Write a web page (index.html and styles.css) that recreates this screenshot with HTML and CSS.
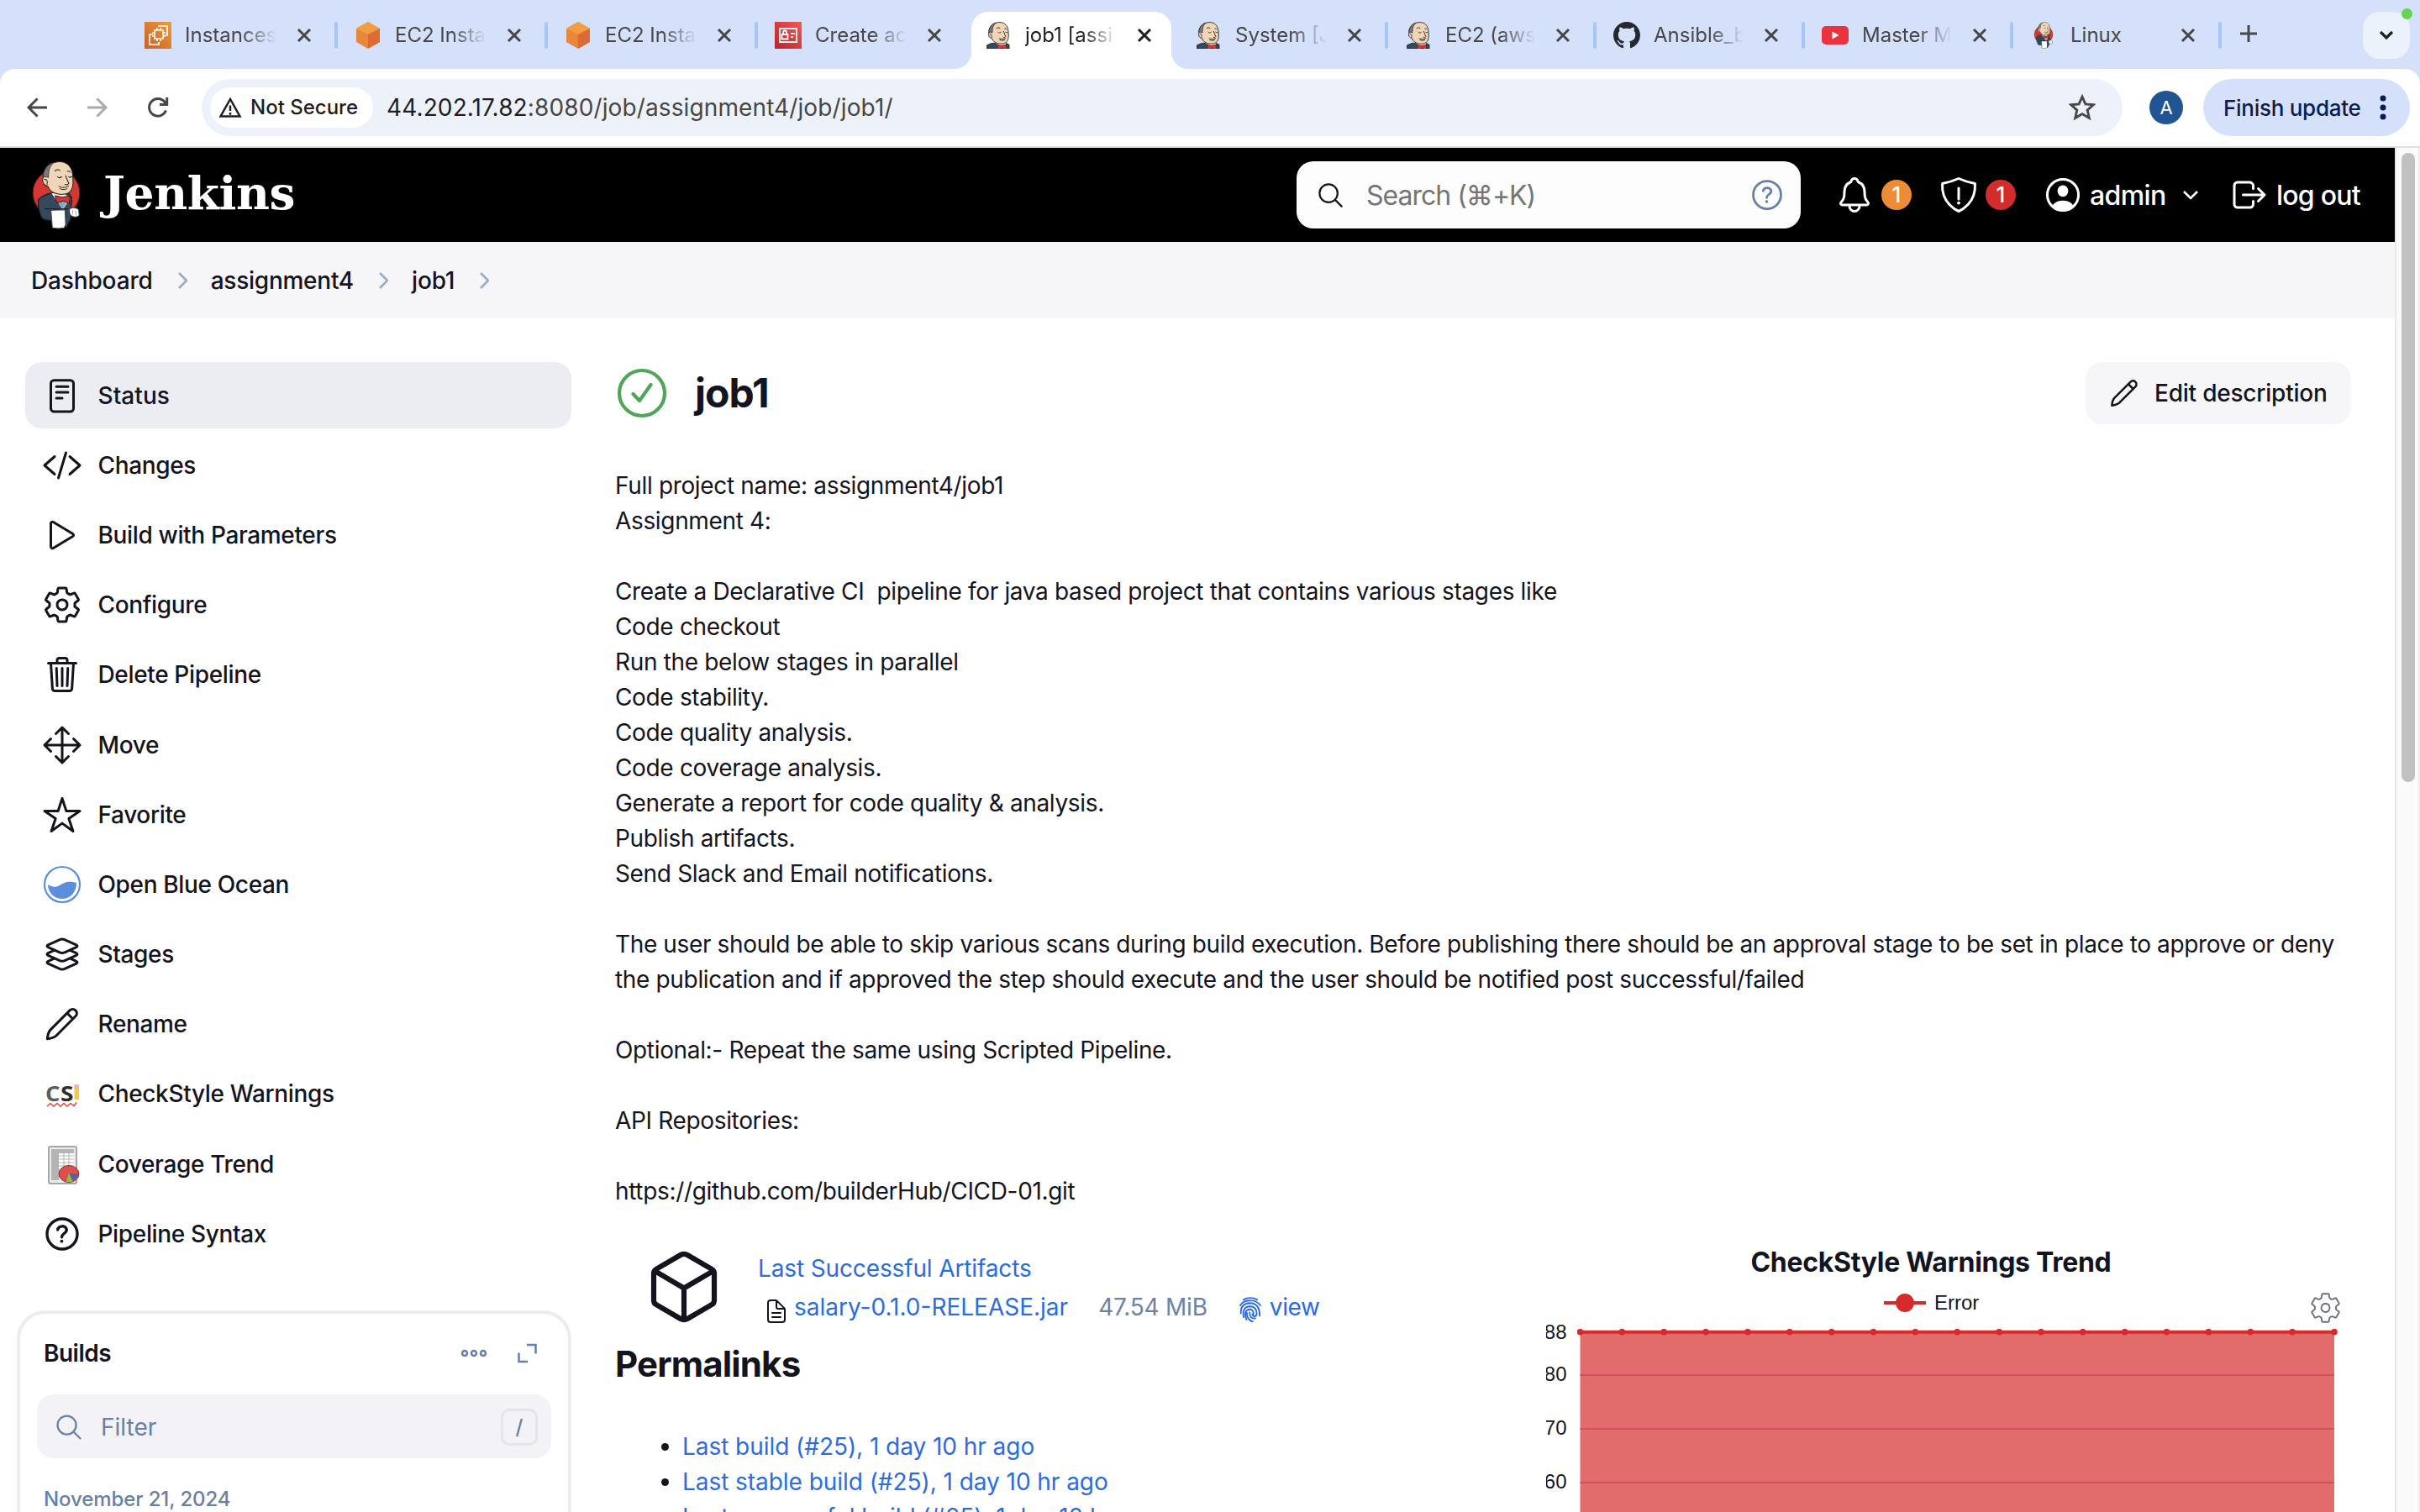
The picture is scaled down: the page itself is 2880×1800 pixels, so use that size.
FILE: index.html
```html
<!DOCTYPE html>
<html lang="en">
<head>
<meta charset="utf-8">
<title>job1 [assignment4] - Jenkins</title>
<link rel="stylesheet" href="styles.css">
</head>
<body>
<svg class="defs" aria-hidden="true">
  <symbol id="butler-head" viewBox="52 20 122 145">
    <path d="M52 165V146l26-11h78l16 9v21z" fill="#33495c" stroke="#1d2226" stroke-width="4"/>
    <path d="M88 128l36 22 26-4 6-14-20 0z" fill="#f3f0ec"/>
    <path d="M62 80c-2-25 15-52 50-57 32-4 52 15 55 45 2 30 3 45-8 59-10 14-42 14-60 5-14-7-17-15-19-22-16-2-23-19-18-30z" fill="#f0d6b7" stroke="#231f20" stroke-width="4"/>
    <path d="M63 78c-2-25 14-48 38-53-11 10-17 20-19 35l-1 19c-8-4-14-4-18-1z" fill="#78797d" stroke="#231f20" stroke-width="3"/>
    <path d="M67 86c9-3 12 5 9 18M104 56c5-6 12-7 18-2M148 57c4-2 8-1 10 3M113 76c4 4 10 4 15 0M153 76c4 3 8 2 11-1M142 72c2 9 9 20 11 28-3 5-9 5-13 3M118 110c12 6 23 5 34-1M122 118c9 4 16 4 25 0" fill="none" stroke="#231f20" stroke-width="4" stroke-linecap="round"/>
    <path d="M105 143l24 5 28-4-2 27-20-10-24 8z" fill="#d33833" stroke="#5a1714" stroke-width="3"/>
  </symbol>
  <symbol id="butler" viewBox="20 18 178 244">
    <circle cx="109" cy="133" r="83" fill="#d33833"/>
    <circle cx="109" cy="133" r="83" fill="none" stroke="#4a201e" stroke-width="3"/>
    <path d="M45 158c12-14 30-20 45-24h62c12 10 14 24 10 40l-2 50-14 26-60-20c-12 0-22-2-28-8-10-20-14-44-13-64z" fill="#33495c" stroke="#1d2226" stroke-width="4"/>
    <path d="M92 134l40 58 26-38-18-18z" fill="#f3f0ec"/>
    <path d="M112 163l20 27 14-24-12-8z" fill="#7fa9cc"/>
    <path d="M62 80c-2-25 15-52 50-57 32-4 52 15 55 45 2 30 3 45-8 59-10 14-42 14-60 5-14-7-17-15-19-22-16-2-23-19-18-30z" fill="#f0d6b7" stroke="#231f20" stroke-width="3"/>
    <path d="M63 78c-2-25 14-48 38-53-11 10-17 20-19 35l-1 19c-8-4-14-4-18-1z" fill="#78797d" stroke="#231f20" stroke-width="2"/>
    <path d="M67 86c9-3 12 5 9 18M104 56c5-6 12-7 18-2M148 57c4-2 8-1 10 3M113 76c4 4 10 4 15 0M153 76c4 3 8 2 11-1M142 72c2 9 9 20 11 28-3 5-9 5-13 3M118 110c12 6 23 5 34-1M122 118c9 4 16 4 25 0" fill="none" stroke="#231f20" stroke-width="3" stroke-linecap="round"/>
    <path d="M105 143l24 5 28-4-2 27-20-10-24 8z" fill="#d33833" stroke="#5a1714" stroke-width="3"/>
    <path d="M68 190h82" stroke="#1d2226" stroke-width="4"/>
    <path d="M90 194l50-1 2 52-5 12c-13 3-28 3-42 0z" fill="#fff" stroke="#3b3f42" stroke-width="3"/>
    <path d="M146 200l-2 52" stroke="#33495c" stroke-width="5"/>
    <path d="M156 190c10-6 24-6 32 2l2 20c-6 8-18 8-26 3-10-4-10-12-8-25z" fill="#fff" stroke="#3b3f42" stroke-width="3"/>
    <path d="M168 194l-2 16M176 196l4 16" stroke="#777" stroke-width="2"/>
  </symbol>
  <symbol id="ec2-cube" viewBox="0 0 32 32">
    <path d="M16 0l14 8v16l-14 8L2 24V8z" fill="#e7873c"/>
    <path d="M16 0l14 8-14 7L2 8z" fill="#f19e42"/>
    <path d="M30 8v16l-14 8V15z" fill="#dd6c34"/>
  </symbol>
  <symbol id="close" viewBox="0 0 18 18"><path d="M2 2l14 14M16 2L2 16" fill="none" stroke="currentColor" stroke-width="3"/></symbol>
  <symbol id="gear" viewBox="0 0 512 512"><path d="M262.29 192.31a64 64 0 1057.4 57.4 64.13 64.13 0 00-57.4-57.4zM416.39 256a154.34 154.34 0 01-1.53 20.79l45.21 35.46a10.81 10.81 0 012.45 13.75l-42.77 74a10.81 10.81 0 01-13.14 4.59l-44.9-18.08a16.11 16.11 0 00-15.17 1.75A164.48 164.48 0 01325 400.8a15.94 15.94 0 00-8.82 12.14l-6.73 47.89a11.08 11.08 0 01-10.68 9.17h-85.54a11.11 11.11 0 01-10.69-8.87l-6.72-47.82a16.07 16.07 0 00-9-12.22 155.3 155.3 0 01-21.46-12.57 16 16 0 00-15.11-1.71l-44.89 18.07a10.81 10.81 0 01-13.14-4.58l-42.77-74a10.8 10.8 0 012.45-13.75l38.21-30a16.05 16.05 0 006-14.08c-.36-4.17-.58-8.33-.58-12.5s.21-8.27.58-12.35a16 16 0 00-6.07-13.94l-38.19-30A10.81 10.81 0 0149.48 186l42.77-74a10.81 10.81 0 0113.14-4.59l44.9 18.08a16.11 16.11 0 0015.17-1.75A164.48 164.48 0 01187 111.2a15.94 15.94 0 008.82-12.14l6.73-47.89A11.08 11.08 0 01213.23 42h85.54a11.11 11.11 0 0110.69 8.87l6.72 47.82a16.07 16.07 0 009 12.22 155.3 155.3 0 0121.46 12.57 16 16 0 0015.11 1.71l44.89-18.07a10.81 10.81 0 0113.14 4.58l42.77 74a10.8 10.8 0 01-2.45 13.75l-38.21 30a16.05 16.05 0 00-6.05 14.08c.33 4.14.55 8.3.55 12.47z"/></symbol>
  <symbol id="help" viewBox="0 0 512 512"><circle cx="256" cy="256" r="192"/><path d="M200 202.29s.84-17.5 19.57-32.57C230.68 160.77 244 158.18 256 158c10.93-.14 20.69 1.67 26.53 4.45 10 4.76 29.47 16.38 29.47 41.09 0 26-17 37.81-36.37 50.8S251 281.43 251 296"/><circle cx="250" cy="348" r="20" fill="currentColor" stroke="none"/></symbol>
  <symbol id="search" viewBox="0 0 512 512"><path d="M221.09 64a157.09 157.09 0 10157.09 157.09A157.1 157.1 0 00221.09 64zM338.29 338.29L448 448"/></symbol>
  <symbol id="pencil" viewBox="0 0 512 512"><path d="M68 446c4-55 14-90 40-117L352 84a50 50 0 0 1 74 74L183 402c-27 26-62 36-115 44zM318 118l74 74"/></symbol>
</svg>

<nav class="tabs">
  <div class="tab"><svg class="fav" viewBox="0 0 32 32"><defs><linearGradient id="o" x1="0" y1="1" x2="1" y2="0"><stop offset="0" stop-color="#c8602a"/><stop offset="1" stop-color="#f19a38"/></linearGradient></defs><path d="M0 0h32v32H0z" fill="url(#o)"/><g fill="none" stroke="#fff" stroke-width="1.7"><path d="M12 10h10v10H12zM15 7v3M19 7v3M15 20v3M19 20v3M9 13h3M9 17h3M22 13h3M22 17h3"/><path d="M16 5h11v11h-3M10 15H6v12h11v-3"/></g></svg><span class="name">Instances</span><svg class="x"><use href="#close"/></svg><i class="sep"></i></div>
  <div class="tab"><svg class="fav"><use href="#ec2-cube"/></svg><span class="name">EC2 Insta</span><svg class="x"><use href="#close"/></svg><i class="sep"></i></div>
  <div class="tab"><svg class="fav"><use href="#ec2-cube"/></svg><span class="name">EC2 Insta</span><svg class="x"><use href="#close"/></svg><i class="sep"></i></div>
  <div class="tab"><svg class="fav" viewBox="0 0 32 32"><defs><linearGradient id="r" x1="0" y1="1" x2="1" y2="0"><stop offset="0" stop-color="#b8232a"/><stop offset="1" stop-color="#ee5a55"/></linearGradient></defs><path d="M0 0h32v32H0z" fill="url(#r)"/><g fill="none" stroke="#fff" stroke-width="1.8"><path d="M6 8h20v16H6zM8.500 15h7v5.500h-7zM10 15v-2.500a2 2 0 0 1 4 0V15M19 14h5M19 18h3"/></g></svg><span class="name">Create ac</span><svg class="x"><use href="#close"/></svg></div>
  <div class="tab active"><svg class="fav"><use href="#butler-head"/></svg><span class="name">job1 [assi</span><svg class="x"><use href="#close"/></svg></div>
  <div class="tab"><svg class="fav"><use href="#butler-head"/></svg><span class="name">System [J</span><svg class="x"><use href="#close"/></svg><i class="sep"></i></div>
  <div class="tab slim"><svg class="fav"><use href="#butler-head"/></svg><span class="name">EC2 (aws</span><svg class="x"><use href="#close"/></svg><i class="sep"></i></div>
  <div class="tab slim"><svg class="fav" viewBox="0 0 16 16"><path fill="#24292f" d="M8 0C3.580 0 0 3.580 0 8c0 3.540 2.290 6.530 5.470 7.590.4.070.55-.17.55-.38 0-.19-.01-.82-.01-1.490-2.010.37-2.530-.49-2.690-.94-.09-.23-.48-.94-.82-1.130-.28-.15-.68-.52-.01-.53.63-.01 1.080.58 1.230.82.72 1.210 1.870.87 2.330.66.07-.52.28-.87.51-1.070-1.780-.2-3.640-.89-3.640-3.950 0-.87.31-1.590.82-2.150-.08-.2-.36-1.020.08-2.120 0 0 .67-.21 2.200.82.64-.18 1.320-.27 2-.27s1.360.09 2 .27c1.530-1.040 2.200-.82 2.200-.82.44 1.100.16 1.920.08 2.120.51.56.82 1.270.82 2.150 0 3.070-1.870 3.750-3.650 3.950.29.25.54.73.54 1.480 0 1.070-.01 1.930-.01 2.200 0 .21.15.46.55.38A8.010 8.010 0 0 0 16 8c0-4.420-3.580-8-8-8z"/></svg><span class="name">Ansible_b</span><svg class="x"><use href="#close"/></svg><i class="sep"></i></div>
  <div class="tab slim"><svg class="fav" viewBox="0 0 32 32"><rect y="5" width="32" height="22" rx="5" fill="#ea333d"/><path d="M12.500 11.500v9l8-4.500z" fill="#fff"/></svg><span class="name">Master M</span><svg class="x"><use href="#close"/></svg><i class="sep"></i></div>
  <div class="tab slim"><svg class="fav"><use href="#butler"/></svg><span class="name plain">Linux</span><svg class="x"><use href="#close"/></svg><i class="sep"></i></div>
  <svg class="plus" viewBox="0 0 22 22"><path d="M11 1v20M1 11h20" stroke="#474747" stroke-width="3"/></svg>
  <div class="tab-menu"><svg viewBox="0 0 18 12"><path d="M2 2l7 7 7-7" fill="none" stroke="#1f1f1f" stroke-width="3.200"/></svg><i class="dot"></i></div>
</nav>

<div class="toolbar">
  <svg class="nav-icon back" viewBox="0 0 24 24"><path d="M12.500 1.500L2 12l10.500 10.500M2 12h22"/></svg>
  <svg class="nav-icon fwd" viewBox="0 0 24 24"><path d="M11.500 1.500L22 12 11.500 22.500M22 12H0"/></svg>
  <svg class="nav-icon reload" viewBox="0 0 26 26"><path d="M22.500 16.500A10.300 10.300 0 1 1 21 6.500l2 2.500M23.700 1v8.500H15"/></svg>
  <div class="omnibox">
    <span class="chip"><svg viewBox="0 0 28 26"><path d="M14 3L2.500 23.500h23zM14 10.500v6.500M14 19v2.800" fill="none" stroke="#1f1f1f" stroke-width="2.500"/></svg>Not Secure</span>
    <span class="url"><b>44.202.17.82</b>:8080/job/assignment4/job/job1/</span>
    <svg class="star" viewBox="0 0 30 30"><path d="M15 3l3.600 8.200 8.900.8-6.700 5.900 2 8.800L15 22.100l-7.800 4.600 2-8.800L2.500 12l8.900-.8z" fill="none" stroke="#474747" stroke-width="2.700"/></svg>
  </div>
  <span class="avatar">A</span>
  <span class="update">Finish update<svg viewBox="0 0 8 30"><circle cx="4" cy="4" r="3.500"/><circle cx="4" cy="15" r="3.500"/><circle cx="4" cy="26" r="3.500"/></svg></span>
</div>

<div class="viewport">
<div class="page">
  <header class="header">
    <svg class="logo"><use href="#butler"/></svg>
    <span class="brand">Jenkins</span>
    <div class="search"><svg class="ion s34"><use href="#search"/></svg><span>Search (⌘+K)</span><svg class="ion q"><use href="#help"/></svg></div>
    <svg class="ion s48 bell" viewBox="0 0 512 512"><path d="M427.68 351.430C402 320 383.870 304 383.870 217.350 383.870 138 343.350 109.730 310 96c-4.430-1.820-8.600-6-9.950-10.550C294.200 65.540 277.800 48 256 48s-38.210 17.550-44 37.470c-1.350 4.600-5.520 8.710-9.950 10.530-33.390 13.750-73.870 41.920-73.870 121.350C128.130 304 110 320 84.320 351.430 73.680 364.450 83 384 101.610 384h308.880c18.510 0 27.770-19.610 17.190-32.570zM320 384v16a64 64 0 0 1-128 0v-16"/></svg>
    <span class="badge orange">1</span>
    <svg class="ion s48 shield" viewBox="0 0 512 512"><path d="M463.100 112.370C373.680 96.330 336.710 84.450 256 48c-80.710 36.450-117.680 48.330-207.100 64.370C32.700 369.130 240.580 457.790 256 464c15.420-6.210 223.300-94.870 207.100-351.630zM256 170v140"/><circle cx="256" cy="358" r="20" fill="#fff" stroke="none"/></svg>
    <span class="badge red">1</span>
    <svg class="ion s48 person" viewBox="0 0 512 512"><defs><clipPath id="pc"><circle cx="256" cy="256" r="196"/></clipPath></defs><circle cx="256" cy="256" r="198"/><g fill="#fff" stroke="none" clip-path="url(#pc)"><ellipse cx="256" cy="206" rx="68" ry="74"/><path d="M110 460c0-90 60-132 146-132s146 42 146 132z"/></g></svg>
    <span class="admin">admin</span>
    <svg class="caret" viewBox="0 0 20 12"><path d="M2 2l8 8 8-8" fill="none" stroke="#fff" stroke-width="2.600"/></svg>
    <svg class="ion s48 exit" viewBox="0 0 512 512"><path d="M304 336v40a40 40 0 0 1-40 40H104a40 40 0 0 1-40-40V136a40 40 0 0 1 40-40h152c22.090 0 48 17.910 48 40v40M368 336l80-80-80-80M176 256h256"/></svg>
    <span class="logout">log out</span>
  </header>
  <div class="crumbs">
    <span>Dashboard</span><svg viewBox="0 0 12 22"><path d="M2 2l9 9-9 9"/></svg>
    <span class="wide">assignment4</span><svg viewBox="0 0 12 22"><path d="M2 2l9 9-9 9"/></svg>
    <span>job1</span><svg viewBox="0 0 12 22"><path d="M2 2l9 9-9 9"/></svg>
  </div>
  <div class="body">
    <aside class="side">
      <div class="menu">
        <a class="item on"><svg class="ion s48" viewBox="0 0 512 512"><rect x="112" y="62" width="288" height="396" rx="40"/><path d="M182 142h148M182 214h148M182 289h74"/></svg>Status</a>
        <a class="item"><svg class="ion s48" viewBox="0 0 512 512"><path d="M160 368L32 256l128-112M352 368l128-112-128-112M304 96l-96 320"/></svg>Changes</a>
        <a class="item"><svg class="ion s48" viewBox="0 0 512 512"><path d="M112 111v290c0 17.440 17 28.520 31 20.160l247.900-148.370c12.120-7.250 12.120-26.330 0-33.580L143 90.840c-14-8.360-31 2.720-31 20.160z"/></svg>Build with Parameters</a>
        <a class="item"><svg class="ion s48"><use href="#gear"/></svg>Configure</a>
        <a class="item"><svg class="ion s48" viewBox="0 0 512 512"><path d="M112 112l20 320c.95 18.490 14.400 32 32 32h184c17.670 0 30.870-13.510 32-32l20-320M80 112h352M192 112V72a23.930 23.930 0 0 1 24-24h80a23.930 23.930 0 0 1 24 24v40M256 176v224M184 176l8 224M328 176l-8 224"/></svg>Delete Pipeline</a>
        <a class="item"><svg class="ion s48" viewBox="0 0 512 512"><path d="M176 112l80-80 80 80M256 32v448M176 400l80 80 80-80M400 176l80 80-80 80M112 176l-80 80 80 80M32 256h448"/></svg>Move</a>
        <a class="item"><svg class="ion s48" viewBox="0 0 512 512"><path d="M480 208H308L256 48l-52 160H32l140 96-54 160 138-100 138 100-54-160z"/></svg>Favorite</a>
        <a class="item"><svg class="s48" viewBox="0 0 48 48"><circle cx="24" cy="24" r="21" fill="#fff" stroke="#5b8fde" stroke-width="2.200"/><path d="M7 24c5 3 9 4 14 1s10-6 20-3c0 11-7 19-17 19S7 33 7 24z" fill="#5b8fde"/></svg>Open Blue Ocean</a>
        <a class="item"><svg class="ion s48" viewBox="0 0 512 512"><path d="M434.800 137.650l-149.360-68.100c-16.190-7.400-42.690-7.400-58.880 0L77.300 137.650c-17.600 8-17.600 21.090 0 29.090l148 67.500c16.890 7.700 44.690 7.700 61.580 0l148-67.500c17.520-8 17.520-21.100-.08-29.090zM160 308.520l-82.700 37.110c-17.600 8-17.600 21.100 0 29.100l148 67.500c16.890 7.690 44.690 7.690 61.580 0l148-67.500c17.600-8 17.600-21.100 0-29.100l-79.940-38.470M160 204.480l-82.800 37.160c-17.600 8-17.600 21.100 0 29.100l148 67.490c16.890 7.700 44.690 7.700 61.580 0l148-67.490c17.700-8 17.700-21.100.1-29.100L352 204.480"/></svg>Stages</a>
        <a class="item"><svg class="ion s48"><use href="#pencil"/></svg>Rename</a>
        <a class="item"><svg class="s48" viewBox="0 0 48 48"><text x="4" y="33" class="cs" fill="#5c5c5c" textLength="17.500" lengthAdjust="spacingAndGlyphs">C</text><text x="22" y="33" class="cs" fill="#2d2d2d" textLength="15.500" lengthAdjust="spacingAndGlyphs">S</text><path d="M38.500 13h5.500v18h-5.500z" fill="#f6c945"/><path d="M38.500 13h5.500v4.500h-5.500z" fill="#f0b3ae"/><path d="M6 39l4-3.500 4 3.500 4-3.500 4 3.500 4-3.500 4 3.500 4-3.500 4 3 3-4" fill="none" stroke="#e2463c" stroke-width="1.500"/></svg>CheckStyle Warnings</a>
        <a class="item"><svg class="s48" viewBox="0 0 48 48"><rect x="8" y="3" width="33" height="44" rx="2" fill="#ececec" stroke="#8d8d8d" stroke-width="1.500"/><path d="M11 6h27v37H11z" fill="#fff"/><path d="M11 6h27v5H11zM11 6h9v37h-9z" fill="#b5b5b5"/><path d="M11 14h27M11 18h27M11 22h27M11 26h27M11 30h27M11 34h27M11 38h27M26 6v37M32 6v37" stroke="#b2b2b2" stroke-width="1"/><ellipse cx="32" cy="35.500" rx="12" ry="10" fill="#d9514b" stroke="#96302c" stroke-width="1"/><path d="M32 35h11a11 9 0 0 1-6 8z" fill="#4767b0"/><path d="M32 34l4 11h-7z" fill="#8bc34a"/></svg>Coverage Trend</a>
        <a class="item"><svg class="ion s48 bold"><use href="#help"/></svg>Pipeline Syntax</a>
      </div>
      <section class="builds">
        <div class="builds-head"><h2>Builds</h2>
          <svg class="more" viewBox="0 0 32 10"><circle cx="5" cy="5" r="3"/><circle cx="16" cy="5" r="3"/><circle cx="27" cy="5" r="3"/></svg>
          <svg class="expand" viewBox="0 0 24 24"><path d="M11 2h10.500v10.500M1.500 11.500V22H12"/></svg>
        </div>
        <div class="filter"><svg class="ion s36"><use href="#search"/></svg><span>Filter</span><kbd>/</kbd></div>
        <p class="date">November 21, 2024</p>
      </section>
    </aside>
    <main class="main">
      <div class="title-row">
        <svg class="ok" viewBox="0 0 60 60"><circle cx="30" cy="30" r="27"/><path d="M19.500 31l7.500 8 13.500-19"/></svg>
        <h1>job1</h1>
        <a class="edit"><svg class="ion s38"><use href="#pencil"/></svg>Edit description</a>
      </div>
      <div class="desc">Full project name: assignment4/job1
Assignment 4:

Create a Declarative CI  pipeline for java based project that contains various stages like
Code checkout
Run the below stages in parallel
Code stability.
Code quality analysis.
Code coverage analysis.
Generate a report for code quality &amp; analysis.
Publish artifacts.
Send Slack and Email notifications.

<span class="long">The user should be able to skip various scans during build execution. Before publishing there should be an approval stage to be set in place to approve or deny</span>
the publication and if approved the step should execute and the user should be notified post successful/failed

Optional:- Repeat the same using Scripted Pipeline.

API Repositories:

https://github.com/builderHub/CICD-01.git</div>
      <div class="lower">
        <div class="left">
          <div class="artifacts">
            <svg class="cube" viewBox="0 0 512 512"><path d="M448 341.370V170.610A32 32 0 0 0 432.110 143l-152-88.460a47.940 47.940 0 0 0-48.240 0L79.890 143A32 32 0 0 0 64 170.610v170.760A32 32 0 0 0 79.890 369l152 88.460a48 48 0 0 0 48.240 0l152-88.460A32 32 0 0 0 448 341.370zM69 153.990l187 110 187-110M256 463.990v-200"/></svg>
            <div class="files">
              <a>Last Successful Artifacts</a>
              <div class="file">
                <svg class="ion s32" viewBox="0 0 512 512"><path d="M416 221.250V416a48 48 0 0 1-48 48H144a48 48 0 0 1-48-48V96a48 48 0 0 1 48-48h98.750a32 32 0 0 1 22.620 9.370l141.260 141.260a32 32 0 0 1 9.370 22.620zM256 56v120a32 32 0 0 0 32 32h120M176 288h160M176 368h160"/></svg>
                <a class="jar">salary-0.1.0-RELEASE.jar</a><span class="size">47.54 MiB</span>
                <svg class="print" viewBox="0 0 26 30"><path d="M5 3.200C10 .6 16 .6 21 3.200M1 10C5 3 18 1.500 25 10M1.800 19.500C1 11 6 7.500 12.500 7.300c8 0 12 6 11.500 15M5 24c-1.500-8 1-12.500 7.500-12.800 6 0 8.500 4.500 8 9.500-.3 3-4.500 3-5-.2M8.500 27c-3-7-1.500-12 4-12.200 3.500 0 4.300 3 4.100 5.700M12.300 18.500c-.3 5 2 7.500 6.700 7M8.900 19c-.2 5 2.500 9.500 7.100 10.400"/></svg>
                <a class="view">view</a>
              </div>
            </div>
          </div>
          <h2 class="perma">Permalinks</h2>
          <ul class="links">
            <li><a>Last build (#25), 1 day 10 hr ago</a></li>
            <li><a>Last stable build (#25), 1 day 10 hr ago</a></li>
            <li><a>Last successful build (#25), 1 day 10 hr ago</a></li>
          </ul>
        </div>
        <div class="trend">
          <h3>CheckStyle Warnings Trend</h3>
          <svg class="chart" viewBox="0 0 958 276">
            <defs><marker id="pt" markerUnits="userSpaceOnUse" markerWidth="8" markerHeight="8" refX="4" refY="4"><circle cx="4" cy="4" r="3.800" fill="#d42c2c"/></marker></defs>
            <path d="M402 27h50" stroke="#d42c2c" stroke-width="4"/><circle cx="427" cy="27" r="11" fill="#d42c2c"/>
            <text x="462" y="35">Error</text>
            <svg class="cfg" x="907.500" y="13" width="40" height="40"><use href="#gear"/></svg>
            <path d="M40.500 61.700h897.500V276H40.500z" fill="#e26b6b"/>
            <path d="M40.500 113h897.500M40.500 177h897.500M40.500 241h897.500" stroke="#d54c63" stroke-width="2"/>
            <polyline points="40.500,61.700 90.400,61.700 140.200,61.700 190.100,61.700 239.900,61.700 289.800,61.700 339.700,61.700 389.500,61.700 439.400,61.700 489.200,61.700 539.100,61.700 589,61.700 638.800,61.700 688.700,61.700 738.500,61.700 788.400,61.700 838.300,61.700 888.100,61.700 938,61.700" fill="none" stroke="#d42c2c" stroke-width="4" marker-start="url(#pt)" marker-mid="url(#pt)" marker-end="url(#pt)"/>
            <g text-anchor="end"><text x="24.500" y="70">88</text><text x="24.500" y="120">80</text><text x="24.500" y="184">70</text><text x="24.500" y="248">60</text></g>
          </svg>
        </div>
      </div>
    </main>
  </div>
</div>
<div class="scroll"><i></i></div>
</div>
</body>
</html>
```
FILE: styles.css
```css
* { box-sizing: border-box; }
html, body { margin: 0; }
body {
  width: 2880px; height: 1800px; overflow: hidden;
  display: flex; flex-direction: column;
  background: #d5e0fb; color: #14141f;
  font: 400 28px/42px Inter, "Liberation Sans", sans-serif;
}
h1, h2, h3, p, ul { margin: 0; padding: 0; }
svg { display: block; flex: none; }
.defs { position: absolute; width: 0; height: 0; }
a { color: #2b6cdf; }

.ion { fill: none; stroke: currentColor; stroke-width: 32; stroke-linecap: round; stroke-linejoin: round; }
.bold { stroke-width: 36; }
.s32 { width: 32px; height: 32px; }
.s34 { width: 35px; height: 35px; }
.s36 { width: 36px; height: 36px; }
.s38 { width: 40px; height: 40px; }
.s48 { width: 48px; height: 48px; }

/* tab strip */
.tabs { display: flex; height: 82px; padding-left: 150px; flex: none; }
.tab { position: relative; display: flex; align-items: center; flex: none; width: 250px; padding: 2px 0 0 22px; color: #474747; }
.slim { width: 248px; }
.fav { width: 32px; height: 32px; margin-right: 16px; z-index: 1; }
.name {
  z-index: 1; width: 109px; margin-right: 24px; white-space: nowrap;
  font-size: 24px; line-height: 36px;
  -webkit-mask-image: linear-gradient(90deg, #000 62%, transparent);
  mask-image: linear-gradient(90deg, #000 62%, transparent);
}
.slim .name { width: 107px; }
.plain { -webkit-mask-image: none; mask-image: none; }
.x { width: 18px; height: 18px; z-index: 1; }
.sep { width: 4px; height: 32px; margin: 0 -2px 0 auto; border-radius: 2px; background: #a8c5f7; }
.active { color: #1f1f1f; }
.active::before {
  content: ""; position: absolute; inset: 14px 6px 0 6px;
  background: #fff; border-radius: 20px 20px 0 0;
}
.active::after {
  content: ""; position: absolute; left: -14px; right: -14px; bottom: 0; height: 20px;
  background:
    radial-gradient(circle at 0 0, transparent 19.5px, #fff 20.5px) left / 20px 20px no-repeat,
    radial-gradient(circle at 100% 0, transparent 19.5px, #fff 20.5px) right / 20px 20px no-repeat;
}
.plus { width: 22px; height: 22px; margin: 29px 0 0 23px; }
.tab-menu {
  position: relative; display: grid; place-items: center;
  width: 56px; height: 56px; margin: 14px 12px 0 auto; border-radius: 20px; background: #ecf2fc;
}
.tab-menu svg { width: 18px; height: 12px; }
.dot { position: absolute; top: -4px; right: -3px; width: 13px; height: 13px; border-radius: 50%; background: #66d354; }

/* toolbar */
.toolbar {
  display: flex; align-items: center; flex: none; height: 94px; padding: 0 12px 0 32px;
  background: #fff; border-bottom: 2px solid #dfe0e0; border-radius: 18px 18px 0 0;
}
.nav-icon { width: 24px; height: 24px; fill: none; stroke: #474747; stroke-width: 3; }
.fwd { margin-left: 48px; stroke: #ababab; }
.reload { width: 26px; height: 26px; margin: 0 39px 0 47px; }
.omnibox { display: flex; align-items: center; width: 2286px; height: 68px; padding: 0 32px 0 10px; border-radius: 34px; background: #edf2fa; }
.chip { display: flex; align-items: center; gap: 10px; width: 194px; height: 48px; padding-left: 10px; border-radius: 24px; background: #fff; color: #1f1f1f; font-size: 24px; font-weight: 500; white-space: nowrap; }
.chip svg { width: 28px; height: 26px; }
.url { margin-left: 16px; color: #474747; letter-spacing: .12px; }
.url b { font-weight: 400; color: #1f1f1f; }
.star { width: 32px; height: 32px; margin-left: auto; }
.avatar { width: 40px; height: 40px; margin-left: 32px; border-radius: 50%; background: #205493; color: #fff; font-size: 22px; line-height: 40px; text-align: center; }
.update { display: flex; align-items: center; width: 246px; height: 68px; margin-left: auto; padding: 2px 0 0 24px; border-radius: 34px; background: #d5e0fb; color: #0a1d4e; font-size: 26px; font-weight: 500; letter-spacing: -.27px; white-space: nowrap; }
.update svg { width: 8px; height: 30px; margin: -2px 0 0 22px; fill: #0a1d4e; }

.viewport { display: flex; flex: 1; min-height: 0; background: #fff; }
.page { width: 2850px; overflow: hidden; }
.scroll { width: 30px; padding: 6px 6px 0 6px; background: #fafafa; border-left: 2px solid #e8e8e8; border-right: 2px solid #ededed; }
.scroll i { display: block; width: 16px; height: 749px; border-radius: 8px; background: #c1c1c1; }

/* header */
.header { display: flex; align-items: center; height: 112px; padding-left: 37px; background: #000; color: #fff; font-size: 32px; font-weight: 500; white-space: nowrap; }
.logo { width: 60px; height: 82px; }
.brand { width: 235px; margin: -5px 0 0 26px; font: 700 55px/80px "DejaVu Serif", serif; letter-spacing: -.4px; }
.search { display: flex; align-items: center; width: 600px; height: 80px; margin-left: 1185px; padding: 0 18px 0 23px; border-radius: 20px; background: #fdfdfd; color: #14141f; }
.search span { margin: 2px 0 0 25px; color: #757575; font-weight: 400; letter-spacing: -1px; }
.q { width: 44px; height: 44px; margin-left: auto; color: #6681a5; }
.bell { margin-left: 40px; }
.badge { width: 36px; height: 36px; border-radius: 50%; font-size: 26px; line-height: 36px; text-align: center; }
.orange { margin-left: 8px; background: #ee8b36; }
.red { margin-left: 8px; background: #d42c2c; }
.shield { margin-left: 32px; }
.person { margin-left: 32px; }
.admin { width: 99px; margin: 1px 0 0 8px; letter-spacing: -.6px; }
.caret { width: 20px; height: 12px; margin-left: 11px; }
.exit { margin-left: 36px; }
.logout { margin: 1px 0 0 8px; letter-spacing: -.78px; }

.crumbs { display: flex; align-items: center; height: 91px; padding-left: 37px; background: #f6f6f9; font-weight: 500; letter-spacing: -.15px; }
.crumbs svg { width: 12px; height: 22px; margin: 0 28px 0 29px; fill: none; stroke: #9badc6; stroke-width: 2.800; }
.crumbs .wide { letter-spacing: -.25px; }

/* content */
.body { display: flex; padding-top: 52px; }
.side { width: 660px; margin-left: 20px; flex: none; }
.menu { display: flex; flex-direction: column; gap: 4px; margin-left: 10px; }
.item { display: flex; align-items: center; gap: 18.500px; height: 79.200px; padding-left: 20px; border-radius: 20px; color: #14141f; font-weight: 500; letter-spacing: -.35px; }
.on { background: #ecedf3; letter-spacing: .05px; }
.cs { font: 700 25px "Open Sans", sans-serif; letter-spacing: 0; }
.builds { height: 320px; margin-top: 52px; padding: 0 20px; border: 4px solid #ebebf2; border-radius: 34px; }
.builds-head { display: flex; align-items: center; height: 96px; padding: 0 16px 2px 8px; color: #6681a5; }
.builds h2 { margin-right: auto; color: #14141f; font-size: 28px; font-weight: 600; letter-spacing: -.5px; }
.more { width: 32px; height: 10px; fill: none; stroke: currentColor; stroke-width: 2.500; }
.expand { width: 24px; height: 24px; margin-left: 36px; fill: none; stroke: currentColor; stroke-width: 2.500; }
.filter { display: flex; align-items: center; height: 76px; padding: 1px 16px 0 20px; border-radius: 20px; background: #f2f2f7; color: #6681a5; }
.filter span { margin-left: 20px; }
kbd { width: 44px; height: 44px; margin-left: auto; border: 3px solid #e4e4ee; border-radius: 10px; font: 500 24px/38px Inter, sans-serif; text-align: center; }
.date { margin: 28px 0 0 8px; font-size: 24px; font-weight: 500; letter-spacing: -.1px; color: #6681a5; }

.main { width: 2066px; margin-left: 52px; flex: none; }
.title-row { display: flex; align-items: center; height: 74px; }
.ok { width: 60px; height: 60px; margin-left: 2px; fill: none; stroke: #4ea656; stroke-width: 4.200; stroke-linecap: round; stroke-linejoin: round; }
h1 { margin-left: 33px; font-size: 48px; line-height: 60px; font-weight: 700; letter-spacing: -1px; }
.edit { display: flex; align-items: center; gap: 16px; width: 316px; height: 74px; margin-left: auto; padding-left: 26px; border-radius: 20px; background: #f6f6f9; color: #14141f; font-weight: 500; letter-spacing: -.22px; }
.desc { margin-top: 52px; white-space: pre; letter-spacing: -.34px; }
.long { letter-spacing: -.365px; }
.lower { display: flex; }
.left { width: 1108px; }
.artifacts { display: flex; padding-left: 34px; }
.cube { width: 96px; height: 96px; margin-top: 45px; fill: none; stroke: #14141f; stroke-width: 33; stroke-linejoin: round; }
.files { display: flex; flex-direction: column; gap: 4px; margin: 50px 0 0 40px; letter-spacing: -.13px; }
.file { display: flex; align-items: center; }
.file .s32 { margin: 10px 5px 0 6px; }
.jar { letter-spacing: 0; }
.size { margin-left: 36px; color: #6b83a5; letter-spacing: -.2px; }
.print { width: 26px; height: 30px; margin: 6px 10px 0 38px; fill: none; stroke: #2b6cdf; stroke-width: 1.900; stroke-linecap: round; }
.view { letter-spacing: -.4px; }
.perma { margin-top: 18px; font-size: 42px; line-height: 52px; font-weight: 700; letter-spacing: -.85px; }
.links { margin-top: 51px; list-style: none; }
.links li { display: flex; align-items: center; padding-left: 55px; height: 42px; letter-spacing: -.05px; }
.links li::before { content: ""; width: 9px; height: 9px; margin-right: 16px; border-radius: 50%; background: #14141f; }
.trend { width: 958px; }
.trend h3 { width: 916px; margin-top: 42px; font-size: 32px; line-height: 43px; font-weight: 700; letter-spacing: -.3px; text-align: center; }
.chart { width: 958px; height: 276px; }
.chart text { font: 24px "Liberation Sans", Arial, sans-serif; fill: #14141f; }
.cfg { fill: none; stroke: #6e7079; stroke-width: 24; }
```
